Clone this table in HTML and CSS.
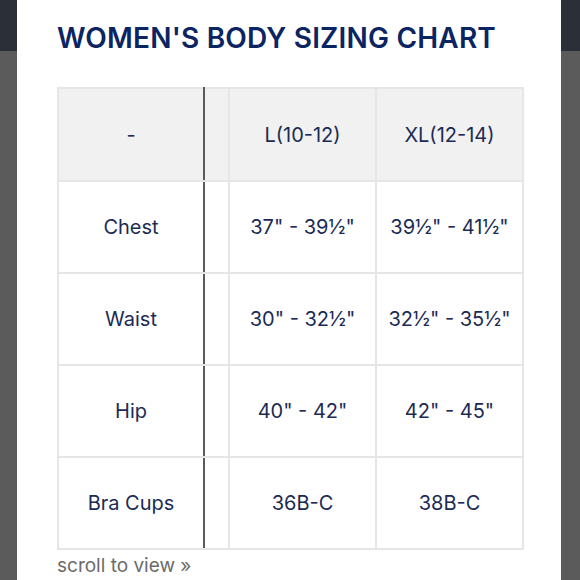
FILE: index.html
```html
<!DOCTYPE html>
<html lang="en">
<head>
<meta charset="utf-8">
<title>Women's Body Sizing Chart</title>
<link rel="stylesheet" href="styles.css">
</head>
<body>
<div class="modal">
  <h1 class="title">WOMEN'S BODY SIZING CHART</h1>
  <table class="chart">
    <colgroup>
      <col class="c-label"><col class="c-gap"><col class="c-size"><col class="c-size">
    </colgroup>
    <thead>
      <tr><th class="lab">-</th><th class="gap"></th><th>L(10-12)</th><th>XL(12-14)</th></tr>
    </thead>
    <tbody>
      <tr><td class="lab">Chest</td><td class="gap"></td><td>37" - 39½"</td><td>39½" - 41½"</td></tr>
      <tr><td class="lab">Waist</td><td class="gap"></td><td>30" - 32½"</td><td>32½" - 35½"</td></tr>
      <tr><td class="lab">Hip</td><td class="gap"></td><td>40" - 42"</td><td>42" - 45"</td></tr>
      <tr><td class="lab">Bra Cups</td><td class="gap"></td><td>36B-C</td><td>38B-C</td></tr>
    </tbody>
  </table>
  <p class="hint">scroll to view »</p>
</div>
</body>
</html>
```

FILE: styles.css
```css
html, body {
  margin: 0;
  padding: 0;
  height: 100%;
}
body {
  background: linear-gradient(to bottom, #2b2f38 0, #2b2f38 51px, #5b5b5b 51px);
  font-family: Inter, "Open Sans", sans-serif;
  overflow: hidden;
}
.modal {
  margin-left: 17px;
  width: 544px;
  height: 580px;
  background: #fff;
  padding: 0 0 0 40px;
  box-sizing: border-box;
}
.title {
  margin: 0;
  padding-top: 21px;
  font-size: 28px;
  line-height: 34px;
  font-weight: 600;
  color: #0b2462;
  letter-spacing: 0.2px;
}
.chart {
  margin-top: 32px;
  border-collapse: collapse;
  table-layout: fixed;
  width: 466px;
}
.c-label { width: 146px; }
.c-gap { width: 25px; }
.c-size { width: 147px; }
.chart th, .chart td {
  border: 2px solid #e6e6e6;
  height: 90px;
  padding: 0;
  text-align: center;
  vertical-align: middle;
  font-size: 20px;
  font-weight: 400;
  color: #1c2b55;
}
.chart th {
  background: #f1f1f1;
  height: 91px;
}
.chart .lab {
  border-right: 2px solid #5a5a5a;
}
.hint {
  margin: 4px 0 0;
  font-size: 19px;
  line-height: 24px;
  color: #6b6b6b;
}
```
